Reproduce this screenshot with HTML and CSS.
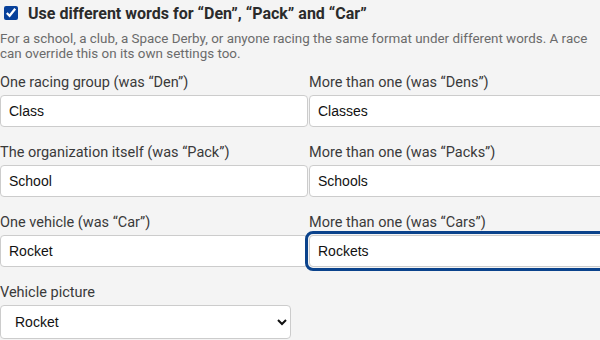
FILE: index.html
```html
<!DOCTYPE html>
<html lang="en">
<head>
  <meta charset="UTF-8" />
  <meta name="viewport" content="width=device-width, initial-scale=1.0" />
  <title>Custom words</title>
  <link rel="stylesheet" href="styles.css">
</head>
<body>

  <div class="panel">
    <label class="toggle">
      <input type="checkbox" checked>
      <span>Use different words for “Den”, “Pack” and “Car”</span>
    </label>

    <p class="hint">For a school, a club, a Space Derby, or anyone racing the same format under different words. A race can override this on its own settings too.</p>

    <div class="words">
      <div class="field">
        <label>One racing group (was “Den”)</label>
        <input type="text" value="Class">
      </div>
      <div class="field">
        <label>More than one (was “Dens”)</label>
        <input type="text" value="Classes">
      </div>

      <div class="field">
        <label>The organization itself (was “Pack”)</label>
        <input type="text" value="School">
      </div>
      <div class="field">
        <label>More than one (was “Packs”)</label>
        <input type="text" value="Schools">
      </div>

      <div class="field">
        <label>One vehicle (was “Car”)</label>
        <input type="text" value="Rocket">
      </div>
      <div class="field">
        <label>More than one (was “Cars”)</label>
        <input type="text" value="Rockets" class="focused">
      </div>

      <div class="field">
        <label>Vehicle picture</label>
        <select>
          <option>Rocket</option>
          <option>Car</option>
          <option>Boat</option>
        </select>
      </div>
    </div>
  </div>

</body>
</html>
```

FILE: styles.css
```css
body {
  margin: 0;
  background-color: #f4f4f4;
  font-family: Roboto, "Liberation Sans", Arial, sans-serif;
  color: #333;
  overflow: hidden;
}

.panel {
  width: 640px;
}

.toggle {
  display: flex;
  align-items: center;
  gap: 10px;
  padding: 2px 0 0 4px;
  height: 22px;
  font-size: 16px;
  font-weight: bold;
  color: #2b2b2b;
}

.toggle input {
  width: 14px;
  height: 14px;
  margin: 0;
  accent-color: #0b57d0;
}

.hint {
  max-width: 594px;
  margin: 7px 0 0 0;
  font-size: 13.4px;
  line-height: 15px;
  color: #6b6b6b;
}

.words {
  display: grid;
  grid-template-columns: 308px 308px;
  column-gap: 1px;
  row-gap: 16px;
  margin-top: 12px;
}

.field label {
  display: block;
  font-size: 14.5px;
  line-height: 20px;
  margin-bottom: 2px;
  color: #3a3a3a;
}

.field input[type="text"] {
  display: block;
  box-sizing: border-box;
  width: 100%;
  height: 32px;
  padding: 0 8px;
  border: 1px solid #ccc;
  border-radius: 4px;
  background-color: white;
  font-family: "Liberation Sans", Arial, sans-serif;
  font-size: 14px;
  color: #111;
}

.field input.focused {
  outline: 3px solid #0b438c;
  outline-offset: 1px;
}

.field select {
  display: block;
  box-sizing: border-box;
  width: 291px;
  height: 34px;
  padding: 0 10px;
  border: 1px solid #ccc;
  border-radius: 4px;
  background-color: white;
  font-family: "Liberation Sans", Arial, sans-serif;
  font-size: 14px;
  color: #111;
}
```
